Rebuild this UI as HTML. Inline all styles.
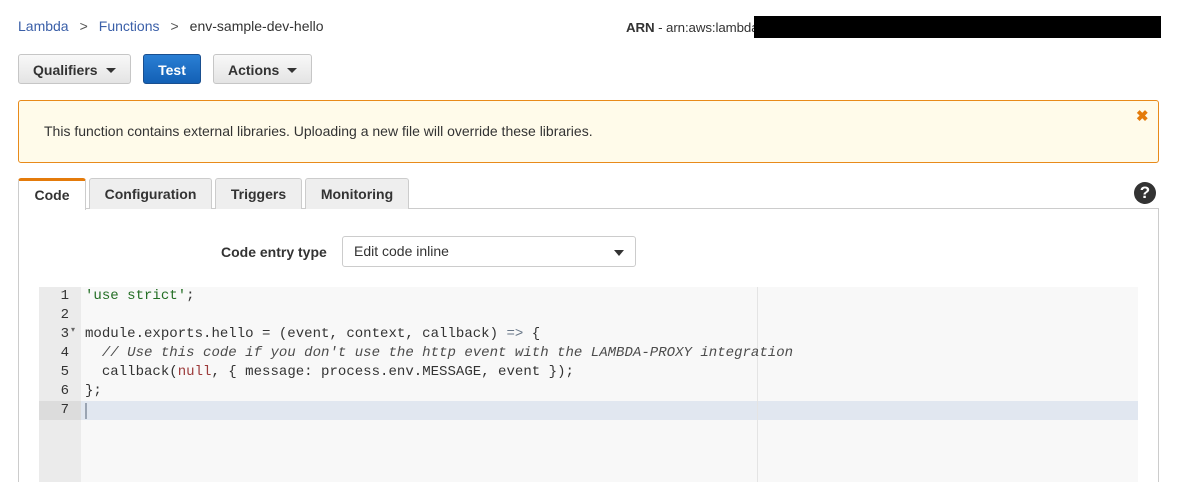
<!DOCTYPE html>
<html><head><meta charset="utf-8"><style>
html,body{margin:0;width:1178px;height:482px;overflow:hidden}
body{background:#fff;font-family:"Liberation Sans",Arial,sans-serif;position:relative;color:#333}
.a{position:absolute}
.btn{position:absolute;top:54px;height:30px;border:1px solid #c6c6c6;border-radius:3px;background:linear-gradient(#f8f8f8,#e4e4e4);font-weight:bold;font-size:14px;line-height:30px;box-sizing:border-box;color:#333}
.car{display:inline-block;width:0;height:0;border-left:5px solid transparent;border-right:5px solid transparent;border-top:5px solid #333;vertical-align:middle;margin-left:8px;margin-top:-2px}
.tab{position:absolute;top:178px;height:31px;border:1px solid #ccc;border-bottom:none;background:#eee;border-radius:3px 3px 0 0;font-weight:bold;font-size:14px;line-height:31px;text-align:center;box-sizing:border-box;color:#333}
.code{font-family:"Liberation Mono",monospace;font-size:14.05px;line-height:19px;white-space:pre;color:#333}
.ln{position:absolute;left:39px;width:30px;text-align:right;font-family:"Liberation Mono",monospace;font-size:14px;line-height:19px;color:#333}
</style></head><body>
<div class="a" style="left:18px;top:18px;font-size:14px;"><span style="color:#3a5fa8">Lambda</span><span style="color:#555;margin:0 11px">&gt;</span><span style="color:#3a5fa8">Functions</span><span style="color:#555;margin:0 11px">&gt;</span><span style="color:#333">env-sample-dev-hello</span></div>
<div class="a" style="left:626px;top:20px;font-size:13.3px;letter-spacing:-0.1px"><b>ARN</b> - arn:aws:lambda</div>
<div class="a" style="left:754px;top:16px;width:407px;height:22px;background:#000"></div>
<div class="btn" style="left:18px;width:113px;padding-left:14px">Qualifiers<span class="car"></span></div>
<div class="btn" style="left:143px;width:58px;background:linear-gradient(#2a7fd4,#1360b5);border-color:#1a4f8f;color:#fff;text-align:center">Test</div>
<div class="btn" style="left:213px;width:99px;padding-left:14px">Actions<span class="car"></span></div>
<div class="a" style="left:18px;top:100px;width:1141px;height:63px;box-sizing:border-box;border:1px solid #e88a1a;border-radius:3px;background:#fffbea"></div>
<div class="a" style="left:44px;top:123px;font-size:14px;color:#333">This function contains external libraries. Uploading a new file will override these libraries.</div>
<div class="a" style="left:1136px;top:107px;font-size:15px;font-weight:bold;color:#e47b0b">✖</div>
<div class="a" style="left:18px;top:208px;width:1141px;height:280px;box-sizing:border-box;border:1px solid #ccc"></div>
<div class="tab" style="left:18px;width:68px;background:#fff;border-top:3px solid #e47b0b;height:32px;line-height:29px">Code</div>
<div class="tab" style="left:89px;width:123px">Configuration</div>
<div class="tab" style="left:215px;width:87px">Triggers</div>
<div class="tab" style="left:305px;width:104px">Monitoring</div>
<div class="a" style="left:1134px;top:182px;width:22px;height:22px;border-radius:50%;background:#333;color:#fff;font-weight:bold;font-size:17px;line-height:22px;text-align:center">?</div>
<div class="a" style="left:221px;top:244px;font-size:14px;font-weight:bold;color:#333">Code entry type</div>
<div class="a" style="left:342px;top:236px;width:294px;height:31px;box-sizing:border-box;border:1px solid #ccc;border-radius:3px;font-size:14px;line-height:29px;padding-left:11px">Edit code inline<span class="a" style="right:11px;top:13px;border-left:5px solid transparent;border-right:5px solid transparent;border-top:6px solid #333"></span></div>
<div class="a" style="left:39px;top:287px;width:1099px;height:195px;background:#f8f8f8"></div>
<div class="a" style="left:39px;top:287px;width:42px;height:195px;background:#ebebeb"></div>
<div class="a" style="left:39px;top:401px;width:42px;height:19px;background:#dcdcdc"></div>
<div class="a" style="left:81px;top:401px;width:1057px;height:19px;background:#e1e7f0"></div>
<div class="a" style="left:757px;top:287px;width:1px;height:195px;background:#e4e4e4"></div>
<div class="a" style="left:85px;top:403px;width:2px;height:16px;background:#9aa4b2"></div>
<div class="ln" style="top:287px">1<br>2<br>3<br>4<br>5<br>6<br>7</div>
<div class="a" style="left:71px;top:325px;font-size:8px;color:#666">▾</div>
<div class="a code" style="left:85px;top:287px"><span style="color:#236e24">'use strict'</span>;

module.exports.hello = (event, context, callback) <span style="color:#687687">=&gt;</span> {
  <span style="color:#4c4c4c;font-style:italic">// Use this code if you don't use the http event with the LAMBDA-PROXY integration</span>
  callback(<span style="color:#9c3a3a">null</span>, { message: process.env.MESSAGE, event });
};
</div>
</body></html>
